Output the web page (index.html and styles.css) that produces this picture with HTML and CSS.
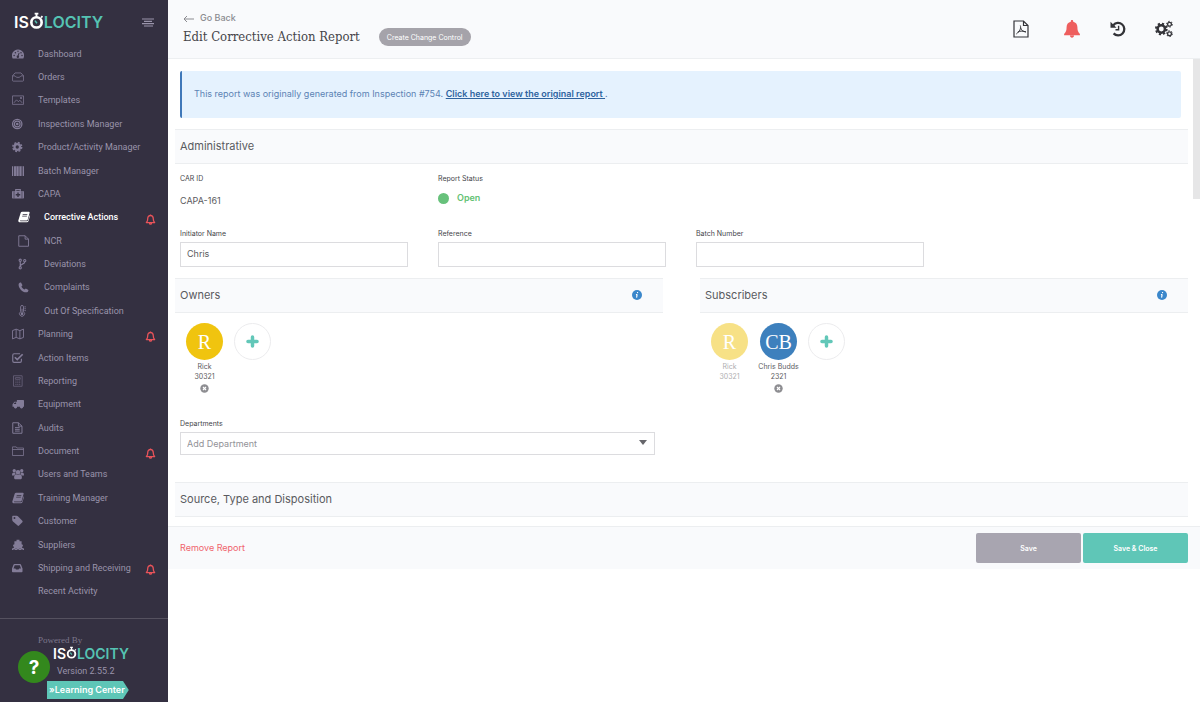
FILE: index.html
```html
<!DOCTYPE html>
<html lang="en">

<head>
    <meta charset="UTF-8">
    <meta name="viewport" content="width=device-width, initial-scale=1.0">
    <title>Edit Corrective Action Report</title>
    <link rel="stylesheet" href="styles.css">
</head>

<body>

    <!-- Shared icons -->
    <svg class="sprite" aria-hidden="true">
        <symbol id="bell-outline" viewBox="0 0 16 16">
            <path d="M2 12.500c1.600-1.500 2-3.200 2-6C4 3.800 5.700 2.200 8 2.200s4 1.600 4 4.300c0 2.800.4 4.500 2 6zM8 2.200V.8M6.500 13a1.500 1.800 0 0 0 3 0" fill="none" stroke="currentColor" stroke-width="1.900" stroke-linejoin="round"/>
        </symbol>
        <symbol id="book" viewBox="0 0 16 16">
            <path d="M5.500 1h9c.8 0 1.200.6 1 1.300l-2.600 9.200c-.2.700-.8 1.100-1.500 1.100H3.300c-.9 0-.9 1 .1 1h8.400c.9 0 1.400-.4 1.700-1.200l2-6.900c.5.400.6.900.4 1.500l-2 6.800c-.3.800-1 1.300-1.900 1.300H2.800C1 15.100 0 13.600.6 11.900L3.600 2.300C3.900 1.500 4.600 1 5.500 1zm.9 3-.3 1h6.200l.3-1zm-.6 2.200-.3 1h6.200l.3-1z" fill="currentColor" fill-rule="evenodd"/>
        </symbol>
        <symbol id="remove" viewBox="0 0 16 16">
            <circle cx="8" cy="8" r="7.500" fill="currentColor"/>
            <path d="M5.300 5.300l5.400 5.400M10.700 5.300l-5.400 5.400" stroke="#fff" stroke-width="2"/>
        </symbol>
        <symbol id="plus" viewBox="0 0 12 12">
            <path d="M6 1.800v8.400M1.800 6h8.400" stroke="currentColor" stroke-width="3.200" stroke-linecap="round"/>
        </symbol>
        <symbol id="info" viewBox="0 0 16 16">
            <circle cx="8" cy="8" r="8" fill="currentColor"/>
            <path d="M9 3.200l-.3 1.800M8.300 7l-1 5.300M6.300 7.300h2" stroke="#fff" stroke-width="1.800"/>
        </symbol>
        <symbol id="watch" viewBox="0 0 16 18">
            <circle cx="8" cy="11" r="5.500" fill="none" stroke="currentColor" stroke-width="2.800"/>
            <path d="M6 1.600h4M8 1.600v4M13 4.500l1.300 1.300" stroke="currentColor" stroke-width="2"/>
            <path d="M8.500 12l-2.200-2.900" stroke="#55c3b3" stroke-width="1.600"/>
        </symbol>
    </svg>

    <div class="app">

        <!-- Sidebar -->
        <aside class="sidebar">
            <div class="sidebar-header">
                <div class="logo">IS<svg class="logo-watch"><use href="#watch"/></svg><span>LOCITY</span></div>
                <button class="menu-toggle" aria-label="Toggle menu">
                    <svg viewBox="0 0 12 9"><path d="M0 1h12M2 3.300h8M0 5.600h12M2 8h9" stroke="currentColor" stroke-width="1.200"/></svg>
                </button>
            </div>

            <nav class="nav">
                <a href="#">
                    <svg viewBox="0 0 16 16"><path d="M8 2a8 8 0 0 0-7.300 11.500c.2.400.5.500.9.500h12.800c.4 0 .7-.1.900-.5A8 8 0 0 0 8 2z" fill="currentColor"/><path d="M7.800 11.500l1.700-5" stroke="#343041" stroke-width="1.300"/><g fill="#343041"><circle cx="7.800" cy="11.700" r="1.600"/><circle cx="2.800" cy="10" r="1"/><circle cx="4.500" cy="6.200" r="1"/><circle cx="8" cy="4.300" r=".9"/><circle cx="12" cy="6.200" r="1"/><circle cx="13.300" cy="10" r="1"/></g></svg>
                    Dashboard
                </a>
                <a href="#">
                    <svg viewBox="0 0 16 16"><path d="M.6 6.500L4 2.600h8l3.400 3.900v6c0 .6-.4 1-1 1H1.600c-.6 0-1-.4-1-1zM.6 6.500H4c1 2.700 7 2.700 8 0h3.400" fill="none" stroke="currentColor"/></svg>
                    Orders
                </a>
                <a href="#">
                    <svg viewBox="0 0 16 16"><path d="M.6 2.500h14.800v11.300H.6zM2.500 11.800l3.500-4 2.500 2.500 2-2 3 3.500" fill="none" stroke="currentColor"/><circle cx="12" cy="5.300" r="1.200" fill="currentColor"/></svg>
                    Templates
                </a>
                <a href="#">
                    <svg viewBox="0 0 16 16"><circle cx="7" cy="8" r="6.200" fill="none" stroke="currentColor" stroke-width="1.700"/><circle cx="7" cy="8" r="3.800" fill="none" stroke="currentColor" stroke-width="1.500"/><circle cx="7" cy="8" r="1.800" fill="currentColor"/></svg>
                    Inspections Manager
                </a>
                <a href="#">
                    <svg viewBox="0 0 16 16"><circle cx="7" cy="8" r="3.700" fill="none" stroke="currentColor" stroke-width="3"/><circle cx="7" cy="8" r="5.900" fill="none" stroke="currentColor" stroke-width="2" stroke-dasharray="2.600 2.030"/></svg>
                    Product/Activity Manager
                </a>
                <a href="#">
                    <svg viewBox="0 0 16 16"><path d="M.8 1.500v13M15.200 1.500v13" stroke="currentColor" stroke-width="1.600"/><path d="M4 1.500v13M7.500 1.500v13M11.300 1.500v13" stroke="currentColor" stroke-width="2.600"/><path d="M5.700 1.500v13M9.400 1.500v13M13.300 1.500v13" stroke="currentColor" stroke-width=".8"/></svg>
                    Batch Manager
                </a>
                <a href="#">
                    <svg viewBox="0 0 16 16"><path d="M5 4.500V2.200h6v2.300" fill="none" stroke="currentColor" stroke-width="1.600"/><path d="M1.500 4h13c.8 0 1.500.7 1.500 1.500v7c0 .8-.7 1.500-1.500 1.500h-13C.7 14 0 13.300 0 12.500v-7C0 4.700.7 4 1.500 4z" fill="currentColor"/><path d="M8 6v6M5 9h6" stroke="#343041" stroke-width="1.800"/><path d="M2.700 4v10M13.300 4v10" stroke="#343041" stroke-width=".8"/></svg>
                    CAPA
                </a>
                <a href="#" class="sub active">
                    <svg><use href="#book"/></svg>
                    Corrective Actions
                    <svg class="alert-bell"><use href="#bell-outline"/></svg>
                </a>
                <a href="#" class="sub">
                    <svg viewBox="0 0 16 16"><path d="M1 1h8.500L14 5.500V15H1zM9.500 1v4.500H14" fill="none" stroke="currentColor" stroke-width="1.200"/></svg>
                    NCR
                </a>
                <a href="#" class="sub">
                    <svg viewBox="0 0 16 16"><path d="M3 4v9M9 5c0 4-6 2.500-6 6" fill="none" stroke="currentColor" stroke-width="1.600"/><g fill="#343041" stroke="currentColor" stroke-width="1.400"><circle cx="3" cy="3" r="1.500"/><circle cx="9" cy="3.500" r="1.500"/><circle cx="3" cy="13" r="1.500"/></g></svg>
                    Deviations
                </a>
                <a href="#" class="sub">
                    <svg viewBox="0 0 16 16"><path d="M1 3.800C1.500 2.500 2.800 2 4 2l2 3.500L4.600 7.200c.7 1.800 2.300 3.400 4.100 4.100l1.700-1.400 3.500 2c0 1.300-.5 2.500-1.800 3C6.700 16.300-.4 9.200 1 3.800z" fill="currentColor"/></svg>
                    Complaints
                </a>
                <a href="#" class="sub">
                    <svg viewBox="0 0 16 16"><path d="M3.500 9V2.500a1.900 1.900 0 0 1 3.800 0V9a3.300 3.300 0 1 1-3.800 0z" fill="none" stroke="currentColor" stroke-width="1.200"/><path d="M5.400 5v6M8.500 2.500h2M8.500 5h2M8.500 7.500h2" stroke="currentColor" stroke-width="1.100"/><circle cx="5.400" cy="11.800" r="1.700" fill="currentColor"/></svg>
                    Out Of Specification
                </a>
                <a href="#">
                    <svg viewBox="0 0 16 16"><path d="M.6 3.500L5.500 1.500l5 2 4.900-2v11l-4.900 2-5-2-4.900 2zM5.500 1.500v11M10.500 3.500v11" fill="none" stroke="currentColor" stroke-width="1.200"/></svg>
                    Planning
                    <svg class="alert-bell"><use href="#bell-outline"/></svg>
                </a>
                <a href="#">
                    <svg viewBox="0 0 16 16"><path d="M12.500 9v3c0 1-.8 1.800-1.800 1.800H2.800C1.800 13.800 1 13 1 12V4.200c0-1 .8-1.800 1.800-1.800h8" fill="none" stroke="currentColor" stroke-width="1.500"/><path d="M3.800 7l3.200 3.200L14.200 3" fill="none" stroke="currentColor" stroke-width="2.300"/></svg>
                    Action Items
                </a>
                <a href="#" class="dim">
                    <svg viewBox="0 0 16 16"><path d="M2 1h11.500v14H2z" fill="none" stroke="currentColor" stroke-width="1.200"/><path d="M4.500 3.500h6.500v2.200H4.500zM4.500 8h1.500M7 8h1.500M9.500 8H11M4.500 10.300h1.500M7 10.300h1.500M9.500 10.300H11M4.500 12.600h1.500M7 12.600h1.500M9.500 12.600H11" fill="none" stroke="currentColor" stroke-width="1.200"/></svg>
                    Reporting
                </a>
                <a href="#">
                    <svg viewBox="0 0 16 16"><path d="M6.500 2.500H15c.6 0 1 .4 1 1v8.300h-1.200a2.100 2.100 0 0 1-4.200 0H6.800a2.100 2.100 0 0 1-4.200 0H.7V8.300L3.200 5h3.300z" fill="currentColor"/><circle cx="4.700" cy="12" r="1.500" fill="currentColor"/><circle cx="12.700" cy="12" r="1.500" fill="currentColor"/><path d="M2.200 8l1.600-2h1.700v2z" fill="#343041"/></svg>
                    Equipment
                </a>
                <a href="#">
                    <svg viewBox="0 0 16 16"><path d="M1 1h7.500L13.300 5.500V15H1zM8.500 1v4.500h4.800M4 7.500h6.300M4 9.800h6.300M4 12.100h6.300" fill="none" stroke="currentColor" stroke-width="1.300"/></svg>
                    Audits
                </a>
                <a href="#">
                    <svg viewBox="0 0 16 16"><path d="M.6 14V2.500h5l1 1.500h8.800v10zM.6 6h14.800" fill="none" stroke="currentColor"/></svg>
                    Document
                    <svg class="alert-bell"><use href="#bell-outline"/></svg>
                </a>
                <a href="#">
                    <svg viewBox="0 0 16 16"><g fill="currentColor"><circle cx="3" cy="3.500" r="2.200"/><circle cx="13" cy="3.500" r="2.200"/><circle cx="8" cy="5.500" r="3"/><path d="M0 9.500C0 7 1 6 2.500 6c1 0 2 .5 2.300 1.500-1 .8-1.300 1.500-1.600 2.500H1c-.7 0-1-.2-1-.5zM16 9.500C16 7 15 6 13.500 6c-1 0-2 .5-2.300 1.500 1 .8 1.300 1.500 1.600 2.500H15c.7 0 1-.2 1-.5z"/><path d="M2.800 13c0-3 1-4.700 3-4.700 1.500 1 2.900 1 4.400 0 2 0 3 1.700 3 4.700 0 1.300-.8 2-2 2H4.800c-1.200 0-2-.7-2-2z"/></g></svg>
                    Users and Teams
                </a>
                <a href="#">
                    <svg><use href="#book"/></svg>
                    Training Manager
                </a>
                <a href="#">
                    <svg viewBox="0 0 16 16"><path d="M.3 2.300C.3 1.600.8 1 1.500 1h4.700c.7 0 1.500.4 2 .9l5.600 5.700c.6.600.6 1.300 0 1.900l-4.400 4.600c-.6.600-1.300.6-1.900 0L1.300 8.500a3 3 0 0 1-1-2zM3.300 2.700a1.300 1.300 0 1 0 0 2.600 1.300 1.300 0 0 0 0-2.600z" fill="currentColor" fill-rule="evenodd"/></svg>
                    Customer
                </a>
                <a href="#">
                    <svg viewBox="0 0 16 16"><path d="M6 1h4v2h2.800v4l2 1-1.800 4.300H3L1.200 8l2-1V3H6z" fill="currentColor"/><path d="M0 13.700c1.300 0 1.600-1 2.700-1s1.500 1 2.700 1 1.500-1 2.600-1 1.500 1 2.700 1 1.500-1 2.600-1 1.400 1 2.700 1" fill="none" stroke="currentColor" stroke-width="2"/></svg>
                    Suppliers
                </a>
                <a href="#">
                    <svg viewBox="0 0 16 16"><path d="M3.300 2.500h7.400c.6 0 1 .3 1.200.8L14 8.500v4c0 .6-.4 1-1 1H1c-.6 0-1-.4-1-1v-4l2.100-5.200c.2-.5.6-.8 1.200-.8zM3.600 4.300L2 8.500h2.500l.8 1.600h3.400l.8-1.600H12l-1.600-4.200z" fill="currentColor" fill-rule="evenodd"/></svg>
                    Shipping and Receiving
                    <svg class="alert-bell"><use href="#bell-outline"/></svg>
                </a>
                <a href="#" class="no-icon">Recent Activity</a>
            </nav>

            <div class="sidebar-footer">
                <p class="powered">Powered By</p>
                <div class="logo logo-small">IS<svg class="logo-watch"><use href="#watch"/></svg><span>LOCITY</span></div>
                <p class="version">Version 2.55.2</p>
                <a href="#" class="learning">»Learning Center</a>
                <button class="help" aria-label="Help">?</button>
            </div>
        </aside>

        <!-- Main -->
        <main class="main">
            <header class="page-header">
                <div class="heading">
                    <a href="#" class="go-back">
                        <svg viewBox="0 0 11 8"><path d="M11 4H1M4 1L1 4l3 3" fill="none" stroke="currentColor"/></svg>
                        Go Back
                    </a>
                    <div class="title-row">
                        <h1>Edit Corrective Action Report</h1>
                        <button class="pill">Create Change Control</button>
                    </div>
                </div>
                <div class="tools">
                    <button aria-label="Export PDF">
                        <svg viewBox="0 0 18 18"><path d="M2 1h9.500L16 5.500V17H2zM11.500 1v4.500H16" fill="none" stroke="currentColor" stroke-width="1.200"/><path d="M8.300 5.500c1 2.500-.5 6-4 8.500M8.600 7.500c.4 2.500 2.500 4.300 5.400 4.500M5.800 12c2-1 4.300-1.300 8-.2" fill="none" stroke="currentColor"/></svg>
                    </button>
                    <button class="red" aria-label="Notifications">
                        <svg viewBox="0 0 18 18"><path d="M9 0c.7 0 1.200.5 1.200 1.200v.5c2.600.5 4.200 2.600 4.200 5.300 0 3.300.6 5.200 2.500 7v1.300H1.100V14c1.900-1.800 2.500-3.700 2.500-7 0-2.700 1.600-4.800 4.200-5.300v-.5C7.800.5 8.300 0 9 0zM7 15.500h4c0 1.300-.8 2.200-2 2.200s-2-.9-2-2.200z" fill="currentColor"/></svg>
                    </button>
                    <button aria-label="History">
                        <svg viewBox="0 0 18 18"><path d="M4.300 5.200A6.200 6.200 0 1 1 4.600 13.400" fill="none" stroke="currentColor" stroke-width="2.300"/><path d="M1.500 1.700v6h6z" fill="currentColor"/><path d="M9.600 5.700v4.100H6.500" fill="none" stroke="currentColor" stroke-width="1.400"/></svg>
                    </button>
                    <button aria-label="Settings">
                        <svg viewBox="0 0 18 18"><g fill="none" stroke="currentColor"><circle cx="6.300" cy="9" r="3.700" stroke-width="2.500"/><circle cx="6.300" cy="9" r="5.400" stroke-width="1.900" stroke-dasharray="2.200 2.040"/><circle cx="14.500" cy="4.200" r="1.900" stroke-width="1.300"/><circle cx="14.500" cy="4.200" r="2.900" stroke-width="1" stroke-dasharray="1.500 1.500"/><circle cx="14.500" cy="13.700" r="1.900" stroke-width="1.300"/><circle cx="14.500" cy="13.700" r="2.900" stroke-width="1" stroke-dasharray="1.500 1.500"/></g></svg>
                    </button>
                </div>
            </header>

            <div class="scroll-area">
                <form class="content" id="report-form">
                    <p class="notice">This report was originally generated from Inspection #754. <a href="#">Click here to view the original report </a>.</p>

                    <h2 class="section-title">Administrative</h2>
                    <div class="fields">
                        <div class="field">
                            <span class="label">CAR ID</span>
                            <span class="value">CAPA-161</span>
                        </div>
                        <div class="field">
                            <span class="label">Report Status</span>
                            <span class="status">Open</span>
                        </div>
                    </div>
                    <div class="fields">
                        <div class="field">
                            <label for="initiator">Initiator Name</label>
                            <input type="text" id="initiator" value="Chris">
                        </div>
                        <div class="field">
                            <label for="reference">Reference</label>
                            <input type="text" id="reference">
                        </div>
                        <div class="field">
                            <label for="batch">Batch Number</label>
                            <input type="text" id="batch">
                        </div>
                    </div>

                    <div class="people">
                        <section>
                            <h2 class="section-title">Owners <svg class="info"><use href="#info"/></svg></h2>
                            <div class="avatars">
                                <div class="person">
                                    <span class="avatar yellow">R</span>
                                    <span>Rick</span>
                                    <span>30321</span>
                                    <button type="button" class="remove" aria-label="Remove Rick"><svg><use href="#remove"/></svg></button>
                                </div>
                                <button type="button" class="avatar add" aria-label="Add owner"><svg><use href="#plus"/></svg></button>
                            </div>
                            <div class="department">
                                <label for="department">Departments</label>
                                <div class="select-wrap">
                                    <select id="department">
                                        <option>Add Department</option>
                                    </select>
                                </div>
                            </div>
                        </section>
                        <section>
                            <h2 class="section-title">Subscribers <svg class="info"><use href="#info"/></svg></h2>
                            <div class="avatars">
                                <div class="person faded">
                                    <span class="avatar yellow">R</span>
                                    <span>Rick</span>
                                    <span>30321</span>
                                </div>
                                <div class="person">
                                    <span class="avatar blue">CB</span>
                                    <span>Chris Budds</span>
                                    <span>2321</span>
                                    <button type="button" class="remove" aria-label="Remove Chris Budds"><svg><use href="#remove"/></svg></button>
                                </div>
                                <button type="button" class="avatar add" aria-label="Add subscriber"><svg><use href="#plus"/></svg></button>
                            </div>
                        </section>
                    </div>

                    <h2 class="section-title">Source, Type and Disposition</h2>
                </form>
                <div class="scrollbar"><div class="thumb"></div></div>
            </div>

            <footer class="actions">
                <a href="#" class="remove-report">Remove Report</a>
                <button class="btn save" form="report-form">Save</button>
                <button class="btn save-close" form="report-form">Save &amp; Close</button>
            </footer>
        </main>
    </div>

</body>

</html>
```

FILE: styles.css
```css
/* General Styles */
* {
    box-sizing: border-box;
}

body {
    margin: 0;
    font-family: Inter, "Liberation Sans", sans-serif;
    font-size: 9px;
    line-height: 12px;
    color: #5a5a60;
    background-color: #fff;
}

h1, h2, p {
    margin: 0;
    font-weight: 400;
}

button, input, select {
    font-family: inherit;
    font-size: inherit;
    color: inherit;
}

button {
    padding: 0;
    border: none;
    background: none;
    cursor: pointer;
}

a {
    text-decoration: none;
}

.sprite {
    position: absolute;
    width: 0;
    height: 0;
}

.app {
    display: flex;
    min-height: 100vh;
}

/* Sidebar */
.sidebar {
    display: flex;
    flex-direction: column;
    flex: none;
    width: 168px;
    background-color: #343041;
    color: #9a94ab;
}

.sidebar-header {
    display: flex;
    align-items: center;
    justify-content: space-between;
    height: 42px;
    padding: 2px 14px 0;
}

.logo {
    display: flex;
    align-items: center;
    font-size: 16px;
    line-height: 18px;
    font-weight: 600;
    color: #fff;
}

.logo span {
    color: #55c3b3;
}

.logo-watch {
    width: 15px;
    height: 17px;
    margin-bottom: 3px;
}

.menu-toggle svg {
    display: block;
    width: 12px;
    height: 9px;
    color: #9a94ab;
}

.nav {
    display: flex;
    flex-direction: column;
    flex: 1;
    margin-bottom: 15px;
    font-family: Roboto, "Liberation Sans", sans-serif;
    white-space: nowrap;
}

.nav a {
    display: flex;
    align-items: center;
    flex: 1;
    gap: 14px;
    padding: 0 12px;
    color: #9a94ab;
}

.nav svg {
    flex: none;
    width: 12px;
    height: 12px;
    color: #837c98;
}

.nav .sub {
    padding-left: 18px;
}

.nav .active,
.nav .active svg {
    color: #fff;
    font-weight: 500;
}

.nav .dim svg {
    color: #645e76;
}

.nav .no-icon {
    padding-left: 38px;
}

.nav a .alert-bell {
    width: 11px;
    height: 11px;
    margin: 4px 0 0 auto;
    color: #e9535a;
}

.sidebar-footer {
    position: relative;
    display: flex;
    flex-direction: column;
    align-items: flex-start;
    height: 84px;
    padding: 15px 0 0 38px;
    border-top: 1px solid #55515f;
}

.powered {
    font-family: "Liberation Serif", serif;
    color: #7d778c;
}

.logo-small {
    margin-left: 15px;
    font-size: 14px;
    line-height: 16px;
}

.logo-small .logo-watch {
    width: 11px;
    height: 13px;
}

.version {
    margin: 3px 0 4px 19px;
    font-family: Roboto, "Liberation Sans", sans-serif;
}

.learning {
    margin-left: 9px;
    padding: 3px 4px 3px 2px;
    background-color: #5ec6b7;
    color: #fff;
    font-weight: 600;
    clip-path: polygon(0 0, 76px 0, 100% 50%, 76px 100%, 0 100%);
}

.help {
    position: absolute;
    left: 18px;
    top: 32px;
    width: 32px;
    height: 32px;
    border-radius: 50%;
    background-color: #33881d;
    color: #fff;
    font-size: 19px;
    font-weight: 700;
}

/* Page Header */
.main {
    flex: 1;
    min-width: 0;
}

.page-header {
    display: flex;
    justify-content: space-between;
    height: 59px;
    padding: 12px 27px 0 15px;
    background-color: #f9fafc;
    border-bottom: 1px solid #edeff1;
}

.go-back {
    display: flex;
    align-items: center;
    gap: 6px;
    color: #8b8b90;
    font-weight: 500;
}

.go-back svg {
    width: 11px;
    height: 8px;
    margin-top: 2px;
}

.title-row {
    display: flex;
    align-items: center;
    gap: 19px;
}

h1 {
    font-family: "DejaVu Serif Condensed", "DejaVu Serif", serif;
    font-size: 13px;
    line-height: 26px;
    color: #45454a;
}

.pill {
    height: 18px;
    padding: 0 8px;
    border-radius: 9px;
    background-color: #a5a3aa;
    color: #fff;
    font-size: 7px;
}

.tools {
    display: flex;
    align-items: flex-start;
    padding-top: 8px;
    color: #333338;
}

.tools button {
    margin-left: 28px;
}

.tools .red {
    margin-left: 33px;
    color: #ee5e5e;
}

.tools svg {
    display: block;
    width: 18px;
    height: 18px;
}

/* Report Form */
.scroll-area {
    display: flex;
}

.content {
    flex: 1;
    padding: 12px 5px 9px 7px;
}

.notice {
    margin: 0 7px 11px 5px;
    padding: 17px 12px 18px;
    border-left: 2px solid #3f78b9;
    border-radius: 2px;
    background-color: #e5f2fe;
    color: #5c83b4;
}

.notice a {
    color: #2f649f;
    font-weight: 600;
    text-decoration: underline;
}

.section-title {
    display: flex;
    align-items: center;
    justify-content: space-between;
    height: 35px;
    padding: 0 21px 2px 5px;
    border-top: 1px solid #eceef0;
    border-bottom: 1px solid #eceef0;
    background-color: #f9fafc;
    font-size: 11px;
}

.info {
    width: 10px;
    height: 10px;
    color: #3b87cb;
}

.fields {
    display: grid;
    grid-template-columns: repeat(4, 1fr);
    gap: 30px;
    padding: 9px 6px 0 5px;
}

.field {
    display: flex;
    flex-direction: column;
    height: 46px;
}

.label, label {
    font-size: 7px;
    color: #45454a;
}

.value {
    margin-top: 10px;
}

.status {
    display: flex;
    align-items: center;
    gap: 8px;
    margin-top: 7px;
    color: #63c274;
    font-weight: 600;
}

.status::before {
    content: "";
    width: 11px;
    height: 11px;
    border-radius: 50%;
    background-color: #67c17b;
}

.field input {
    width: 100%;
    height: 25px;
    margin-top: 2px;
    padding: 0 6px 2px;
    border: 1px solid #dcdcdf;
}

.people {
    display: grid;
    grid-template-columns: 1fr 1fr;
    gap: 37px;
    margin: 4px 0 27px;
}

.avatars {
    display: flex;
    height: 105px;
    padding: 10px 0 0 5px;
}

.person {
    display: flex;
    flex-direction: column;
    align-items: center;
    width: 49px;
    font-size: 7px;
    line-height: 10px;
    white-space: nowrap;
}

.faded {
    opacity: 0.5;
}

.avatar {
    width: 37px;
    height: 37px;
    margin-bottom: 2px;
    border-radius: 50%;
    color: #fff;
    font-family: "Liberation Serif", serif;
    font-size: 20px;
    line-height: 38px;
    text-align: center;
}

.yellow {
    background-color: #f0c40f;
}

.blue {
    background-color: #3d80bd;
}

.add {
    margin-left: 5px;
    border: 1px solid #ececee;
    color: #62c7b8;
    line-height: 0;
}

.add svg {
    width: 13px;
    height: 13px;
}

.remove {
    margin-top: 2px;
    color: #8e8e92;
    line-height: 0;
}

.remove svg {
    width: 9px;
    height: 9px;
}

.department {
    display: flex;
    flex-direction: column;
    padding: 0 8px 0 5px;
}

.select-wrap {
    position: relative;
    margin-top: 2px;
}

.select-wrap::after {
    content: "";
    position: absolute;
    right: 8px;
    top: 8px;
    border: 4px solid transparent;
    border-top: 5px solid #66666b;
    border-bottom: none;
}

select {
    display: block;
    appearance: none;
    width: 100%;
    height: 23px;
    padding: 0 6px;
    border: 1px solid #dcdcdf;
    border-radius: 0;
    background-color: #fff;
    color: #929297;
}

.scrollbar {
    width: 7px;
}

.thumb {
    height: 140px;
    background-color: #e6e6e7;
}

/* Action Bar */
.actions {
    display: flex;
    align-items: center;
    gap: 2px;
    height: 43px;
    padding: 0 12px;
    border-top: 1px solid #eceef0;
    background-color: #f9fafc;
}

.remove-report {
    margin-right: auto;
    color: #f0646c;
}

.btn {
    width: 105px;
    height: 30px;
    border-radius: 2px;
    color: #fff;
    font-size: 7px;
    font-weight: 600;
}

.save {
    background-color: #a8a5b0;
}

.save-close {
    background-color: #5fc6b7;
}
```
